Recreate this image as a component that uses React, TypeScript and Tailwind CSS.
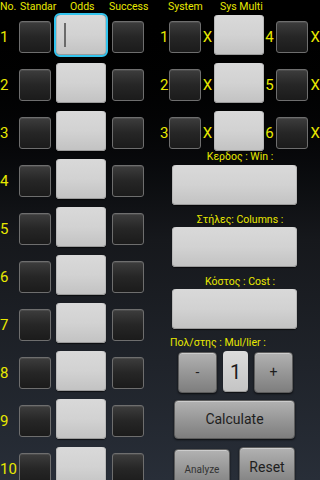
const yellow = "text-[#e8e800]";

function Check() {
  return (
    <div className="h-[32px] w-[32px] shrink-0 rounded-[3px] border border-[#6e6e6e] bg-gradient-to-b from-[#3d3d3d] via-[#262626] to-[#1b1b1b] shadow-[inset_0_1px_0_rgba(255,255,255,0.08)]" />
  );
}

function Field({ focused = false, className = "" }: { focused?: boolean; className?: string }) {
  return (
    <div
      className={`relative shrink-0 rounded-[4px] bg-gradient-to-b from-[#d9d9d9] via-[#d2d2d2] to-[#c2c2c2] shadow-[inset_0_-1px_0_#9a9a9a,inset_1px_0_0_#b8b8b8,inset_-1px_0_0_#b8b8b8,0_1px_1px_rgba(0,0,0,0.6)] ${
        focused ? "outline-2 outline-[#33c4ee]" : ""
      } ${className}`}
    >
      {focused && <div className="absolute left-[8px] top-[8px] h-[24px] w-[2px] bg-[#6a6a6a]" />}
    </div>
  );
}

function Btn({ label, className = "" }: { label: string; className?: string }) {
  return (
    <div
      className={`flex shrink-0 items-center justify-center rounded-[4px] border border-[#5c5c5c] bg-gradient-to-b from-[#b2b2b2] via-[#979797] to-[#7e7e7e] text-[#1e1e1e] shadow-[inset_0_1px_0_rgba(255,255,255,0.35),0_1px_2px_rgba(0,0,0,0.7)] ${className}`}
    >
      {label}
    </div>
  );
}

export default function App() {
  const rows = [1, 2, 3, 4, 5, 6, 7, 8, 9, 10];
  const sys = [
    [1, 4],
    [2, 5],
    [3, 6],
  ];

  return (
    <div className="flex h-[480px] w-[320px] overflow-hidden bg-gradient-to-b from-black via-[#16181c] to-[#282e38] font-['Roboto','Liberation_Sans',sans-serif]">
      {/* left column */}
      <div className="w-[160px] shrink-0">
        <div className={`flex h-[13px] pt-[1px] text-[10.5px] leading-[12px] ${yellow}`}>
          <span className="w-[20px]">No.</span>
          <span className="w-[50px]">Standar</span>
          <span className="w-[39px]">Odds</span>
          <span>Success</span>
        </div>
        {rows.map((n) => (
          <div key={n} className="flex h-[48px] items-center">
            <span className={`w-[19px] text-[15px] ${yellow}`}>{n}</span>
            <Check />
            <Field focused={n === 1} className="mb-[4px] ml-[5px] h-[40px] w-[50px]" />
            <div className="ml-[6px]">
              <Check />
            </div>
          </div>
        ))}
      </div>

      {/* right column */}
      <div className="w-[160px] shrink-0">
        <div className={`flex h-[13px] pt-[1px] text-[10.5px] leading-[12px] ${yellow}`}>
          <span className="w-[60px] pl-[8px]">System</span>
          <span>Sys Multi</span>
        </div>
        {sys.map(([a, b]) => (
          <div key={a} className={`flex h-[48px] items-center text-[15px] ${yellow}`}>
            <span className="w-[11px]">{a}</span>
            <Check />
            <span className="w-[14px] text-center">X</span>
            <Field className="mb-[4px] h-[40px] w-[50px]" />
            <span className="w-[14px] text-center">{b}</span>
            <Check />
            <span className="ml-[3px]">X</span>
          </div>
        ))}

        <div className={`-mt-[6px] h-[12px] text-center text-[10.5px] leading-[12px] ${yellow}`}>Κερδος : Win :</div>
        <Field className="ml-[12px] mt-[2px] h-[40px] w-[125px]" />
        <div className={`mt-[9px] h-[12px] text-center text-[10.5px] leading-[12px] ${yellow}`}>Στήλες: Columns :</div>
        <Field className="ml-[12px] mt-[1px] h-[40px] w-[125px]" />
        <div className={`mt-[9px] h-[12px] text-center text-[10.5px] leading-[12px] ${yellow}`}>Κόστος : Cost :</div>
        <Field className="ml-[12px] mt-[1px] h-[40px] w-[125px]" />
        <div className={`mt-[8px] h-[12px] pl-[10px] text-[10.5px] leading-[12px] ${yellow}`}>Πολ/στης : Mul/lier :</div>

        <div className="mt-[2px] flex items-start">
          <Btn label="-" className="ml-[18px] mt-[1px] h-[41px] w-[39px] text-[14px]" />
          <div className="ml-[6px] flex h-[41px] w-[25px] shrink-0 items-center justify-center rounded-[4px] bg-gradient-to-b from-[#dcdcdc] to-[#c4c4c4] text-[20px] text-[#1a1a1a] shadow-[inset_0_-1px_0_#9a9a9a,0_1px_1px_rgba(0,0,0,0.6)]">
            1
          </div>
          <Btn label="+" className="ml-[6px] mt-[1px] h-[41px] w-[39px] text-[14px]" />
        </div>

        <Btn label="Calculate" className="ml-[14px] mt-[7px] h-[39px] w-[121px] text-[14px]" />

        <div className="mt-[8px] flex items-start">
          <Btn label="Analyze" className="ml-[14px] mt-[2px] h-[40px] w-[56px] text-[10px] text-[#333]" />
          <Btn label="Reset" className="ml-[9px] h-[40px] w-[56px] text-[14px]" />
        </div>
      </div>
    </div>
  );
}
